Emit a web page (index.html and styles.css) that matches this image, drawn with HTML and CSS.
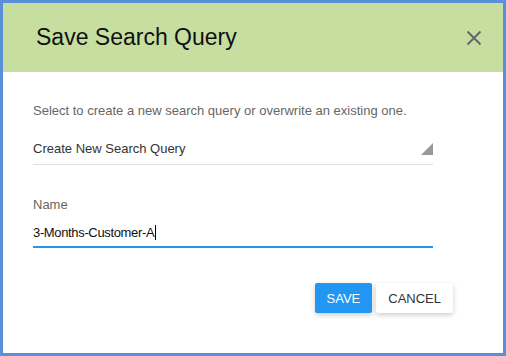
FILE: index.html
```html
<!DOCTYPE html>
<html lang="en">
<head>
    <meta charset="UTF-8">
    <title>Save Search Query</title>
    <link rel="stylesheet" href="styles.css">
</head>
<body>
    <div class="dialog">
        <div class="dialog-header">
            <h1>Save Search Query</h1>
            <button class="close-btn" type="button" aria-label="Close">
                <svg width="16" height="16" viewBox="0 0 16 16">
                    <path d="M1.5 1.5 L14.5 14.5 M14.5 1.5 L1.5 14.5" stroke="#666" stroke-width="2" fill="none"/>
                </svg>
            </button>
        </div>
        <div class="dialog-body">
            <p class="hint">Select to create a new search query or overwrite an existing one.</p>
            <div class="select">
                <span>Create New Search Query</span>
                <span class="select-arrow"></span>
            </div>
            <label class="field-label">Name</label>
            <div class="field-input">3-Months-Customer-A<span class="caret"></span></div>
        </div>
        <div class="dialog-footer">
            <button type="button" class="btn btn-save">SAVE</button>
            <button type="button" class="btn btn-cancel">CANCEL</button>
        </div>
    </div>
</body>
</html>
```

FILE: styles.css
```css
body {
    margin: 0;
    font-family: 'Liberation Sans', Arial, sans-serif;
    background-color: #fff;
}

.dialog {
    width: 500px;
    height: 350px;
    border: 3px solid #5b8fd8;
    background: #fff;
    display: flex;
    flex-direction: column;
}

.dialog-header {
    height: 69px;
    background-color: #c6dfa0;
    display: flex;
    align-items: center;
    justify-content: space-between;
    padding: 0 21px 0 33px;
}

.dialog-header h1 {
    margin: 0;
    font-weight: normal;
    font-size: 23px;
    color: #111;
}

.close-btn {
    background: none;
    border: none;
    padding: 0;
    width: 16px;
    height: 16px;
    cursor: pointer;
}

.close-btn svg {
    display: block;
}

.dialog-body {
    padding: 31px 70px 0 30px;
}

.hint {
    margin: 0;
    font-size: 13px;
    line-height: 16px;
    color: #666;
}

.select {
    margin-top: 20px;
    display: flex;
    justify-content: space-between;
    align-items: center;
    font-size: 13px;
    line-height: 20px;
    color: #333;
    padding-bottom: 5px;
    border-bottom: 1px solid #e0e0e0;
}

.select-arrow {
    width: 0;
    height: 0;
    border-left: 12px solid transparent;
    border-bottom: 12px solid #999;
}

.field-label {
    display: block;
    margin-top: 32px;
    font-size: 13px;
    line-height: 16px;
    color: #666;
}

.field-input {
    margin-top: 10px;
    font-size: 13px;
    line-height: 20px;
    letter-spacing: -0.35px;
    color: #111;
    padding-bottom: 3px;
    border-bottom: 2px solid #2196f3;
}

.caret {
    display: inline-block;
    width: 1px;
    height: 15px;
    margin-left: 1px;
    background: #000;
    vertical-align: -3px;
}

.dialog-footer {
    display: flex;
    justify-content: flex-end;
    gap: 4px;
    padding: 35px 50px 0 0;
}

.btn {
    height: 30px;
    padding: 0 12px;
    border: none;
    border-radius: 2px;
    font-family: 'Liberation Sans', Arial, sans-serif;
    font-size: 13px;
    cursor: pointer;
    box-shadow: 0 2px 5px rgba(0, 0, 0, 0.2);
}

.btn-save {
    background-color: #2196f3;
    color: #fff;
}

.btn-cancel {
    background-color: #fff;
    color: #333;
}
```
